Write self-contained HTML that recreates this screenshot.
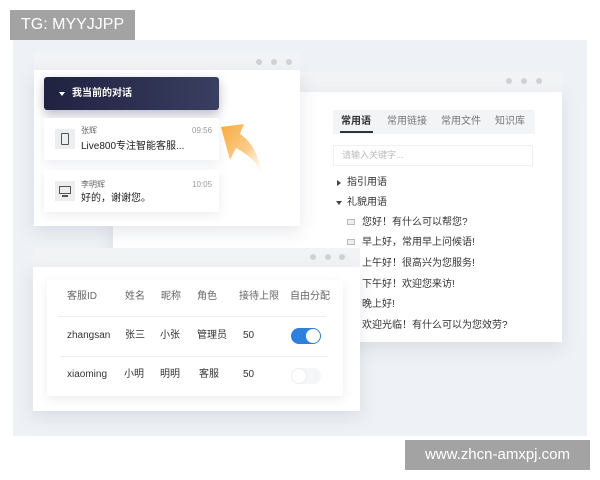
<!DOCTYPE html>
<html><head><meta charset="utf-8"><style>
*{margin:0;padding:0;box-sizing:border-box}
body{width:600px;height:480px;background:#fff;position:relative;overflow:hidden;font-family:"Liberation Sans","Noto Sans CJK SC",sans-serif;color:#333}
.abs{position:absolute}
.bg{left:13px;top:40px;width:574px;height:396px;background:#eef2f6}
.win{background:#fff;box-shadow:0 6px 16px rgba(120,130,150,.18)}
.bar{background:#f2f3f5}
.dot{position:absolute;width:6px;height:6px;border-radius:50%;background:#cfd2d6}
.t{position:absolute;white-space:nowrap;font-size:10px;line-height:16px}
.item{position:absolute;left:44px;width:175px;height:42px;background:#fff;box-shadow:0 3px 10px rgba(100,110,130,.12)}
.ico{position:absolute;left:11px;top:11px;width:20px;height:20px;background:#eceef0}
.tri-d{position:absolute;width:0;height:0;border-left:3px solid transparent;border-right:3px solid transparent;border-top:4px solid #444}
.tri-r{position:absolute;width:0;height:0;border-top:3px solid transparent;border-bottom:3px solid transparent;border-left:4px solid #444}
</style></head><body>
<div class="abs bg"></div>

<!-- right window -->
<div class="abs bar" style="left:113px;top:72px;width:449px;height:20px;"></div>
<div class="dot" style="left:506px;top:78px"></div><div class="dot" style="left:521px;top:78px"></div><div class="dot" style="left:536px;top:78px"></div>
<div class="abs win" style="left:113px;top:92px;width:449px;height:250px;"></div>
<div class="abs" style="left:333px;top:110px;width:202px;height:24px;background:#f3f4f6"></div>
<div class="t" style="left:341px;top:114px;font-weight:bold;color:#333">常用语</div>
<div class="abs" style="left:340px;top:131px;width:33px;height:2px;background:#333"></div>
<div class="t" style="left:387px;top:114px;color:#777">常用链接</div>
<div class="t" style="left:441px;top:114px;color:#777">常用文件</div>
<div class="t" style="left:495px;top:114px;color:#777">知识库</div>
<div class="abs" style="left:333px;top:145px;width:200px;height:21px;border:1px solid #eef0f2"></div>
<div class="t" style="left:342px;top:147px;color:#bbb;font-size:9px">请输入关键字...</div>
<div class="tri-r" style="left:337px;top:180px"></div>
<div class="t" style="left:347px;top:175px">指引用语</div>
<div class="tri-d" style="left:336px;top:201px"></div>
<div class="t" style="left:347px;top:195px">礼貌用语</div>
<div class="abs" style="left:347px;top:219px;width:8px;height:6px;border:1px solid #bbb;background:#eee"></div>
<div class="t" style="left:362px;top:215px">您好！有什么可以帮您?</div>
<div class="abs" style="left:347px;top:239px;width:8px;height:6px;border:1px solid #bbb;background:#eee"></div>
<div class="t" style="left:362px;top:235px">早上好，常用早上问候语!</div>
<div class="t" style="left:362px;top:256px">上午好！很高兴为您服务!</div>
<div class="t" style="left:362px;top:277px">下午好！欢迎您来访!</div>
<div class="t" style="left:362px;top:297px">晚上好!</div>
<div class="t" style="left:362px;top:318px">欢迎光临！有什么可以为您效劳?</div>

<!-- left window -->
<div class="abs bar" style="left:34px;top:52px;width:266px;height:18px;"></div>
<div class="dot" style="left:256px;top:59px"></div><div class="dot" style="left:271px;top:59px"></div><div class="dot" style="left:286px;top:59px"></div>
<div class="abs win" style="left:34px;top:70px;width:266px;height:156px;"></div>
<div class="abs" style="left:44px;top:77px;width:175px;height:33px;border-radius:3px;background:linear-gradient(90deg,#1f2240,#3a3e60);box-shadow:0 4px 10px rgba(30,30,60,.3)"></div>
<div class="tri-d" style="left:59px;top:92px;border-top-color:#fff"></div>
<div class="t" style="left:72px;top:86px;color:#fff;font-weight:bold">我当前的对话</div>
<div class="item" style="top:118px"><div class="ico"><div class="abs" style="left:6px;top:4px;width:8px;height:12px;border:1.5px solid #555;border-radius:1px"></div></div>
<div class="t" style="left:37px;top:5px;font-size:8px;color:#666">张辉</div><div class="t" style="left:37px;top:21px;color:#222">Live800专注智能客服...</div><div class="t" style="left:148px;top:5px;font-size:8px;color:#999">09:56</div></div>
<div class="item" style="top:170px"><div class="ico"><div class="abs" style="left:4px;top:5px;width:12px;height:8px;border:1.5px solid #555"></div><div class="abs" style="left:7px;top:14px;width:6px;height:1.5px;background:#555"></div></div>
<div class="t" style="left:37px;top:7px;font-size:8px;color:#666">李明辉</div><div class="t" style="left:37px;top:21px;color:#222">好的，谢谢您。</div><div class="t" style="left:148px;top:7px;font-size:8px;color:#999">10:05</div></div>
<svg class="abs" style="left:218px;top:122px" width="50" height="60" viewBox="0 0 50 60"><defs><linearGradient id="g" x1="0" y1="0" x2="1" y2="1"><stop offset="0" stop-color="#f7a93a"/><stop offset=".6" stop-color="#f9c070" stop-opacity=".8"/><stop offset="1" stop-color="#fde3bd" stop-opacity=".1"/></linearGradient></defs><path d="M3 5 L26 2 L22 12 Q38 22 44 50 Q34 34 18 26 L12 38 Z" fill="url(#g)"/></svg>

<!-- bottom window -->
<div class="abs bar" style="left:33px;top:248px;width:327px;height:19px;"></div>
<div class="dot" style="left:310px;top:254px"></div><div class="dot" style="left:325px;top:254px"></div><div class="dot" style="left:339px;top:254px"></div>
<div class="abs win" style="left:33px;top:267px;width:327px;height:144px;"></div>
<div class="abs" style="left:47px;top:280px;width:296px;height:116px;background:#fff;box-shadow:0 3px 10px rgba(100,110,130,.12)"></div>
<div class="abs" style="left:58px;top:316px;width:268px;height:1px;background:#eceef0"></div>
<div class="abs" style="left:60px;top:356px;width:268px;height:1px;background:#eceef0"></div>
<div class="t" style="left:67px;top:289px;color:#666">客服ID</div><div class="t" style="left:125px;top:289px;color:#666">姓名</div><div class="t" style="left:161px;top:289px;color:#666">昵称</div><div class="t" style="left:197px;top:289px;color:#666">角色</div><div class="t" style="left:239px;top:289px;color:#666">接待上限</div><div class="t" style="left:290px;top:289px;color:#666">自由分配</div>
<div class="t" style="left:67px;top:328px">zhangsan</div><div class="t" style="left:125px;top:328px">张三</div><div class="t" style="left:160px;top:328px">小张</div><div class="t" style="left:197px;top:328px">管理员</div><div class="t" style="left:243px;top:328px">50</div>
<div class="abs" style="left:291px;top:328px;width:30px;height:16px;border-radius:8px;background:#2f7fde"></div><div class="abs" style="left:306px;top:329px;width:14px;height:14px;border-radius:50%;background:#fff"></div>
<div class="t" style="left:67px;top:367px">xiaoming</div><div class="t" style="left:124px;top:367px">小明</div><div class="t" style="left:160px;top:367px">明明</div><div class="t" style="left:199px;top:367px">客服</div><div class="t" style="left:243px;top:367px">50</div>
<div class="abs" style="left:291px;top:368px;width:30px;height:16px;border-radius:8px;background:#f5f6f7"></div><div class="abs" style="left:292px;top:369px;width:14px;height:14px;border-radius:50%;background:#fff;box-shadow:0 0 2px rgba(0,0,0,.1)"></div>

<!-- watermarks -->
<div class="abs" style="left:10px;top:10px;width:125px;height:30px;background:#a3a3a3;color:#fff;font-size:16px;line-height:30px;padding-left:11px">TG: MYYJJPP</div>
<div class="abs" style="left:405px;top:440px;width:185px;height:30px;background:#a3a3a3;color:#fff;font-size:15px;line-height:30px;text-align:center">www.zhcn-amxpj.com</div>
</body></html>
